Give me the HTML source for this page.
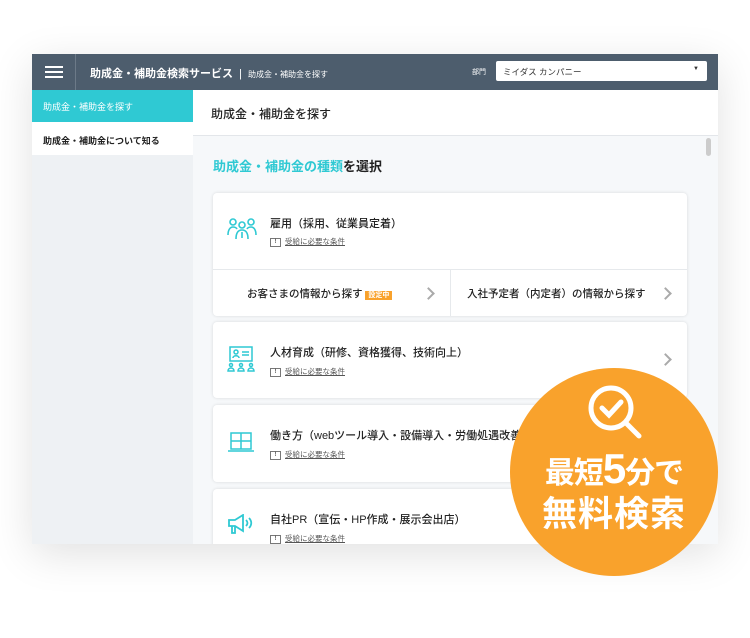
<!DOCTYPE html>
<html><head><meta charset="utf-8"><style>
*{margin:0;padding:0;box-sizing:border-box}
body{width:750px;height:638px;background:#fff;font-family:"Liberation Sans","Noto Sans CJK JP",sans-serif;position:relative;overflow:hidden;color:#222}
.win{position:absolute;left:32px;top:54px;width:686px;height:490px;background:#fff;box-shadow:0 10px 40px rgba(0,0,0,.12);overflow:hidden}
.hdr{position:absolute;left:0;top:0;width:686px;height:36px;background:#4d5d6d;color:#fff}
.burger{position:absolute;left:0;top:0;width:44px;height:36px;border-right:1px solid #6c7a88}
.burger i{position:absolute;left:13px;width:18px;height:2px;background:#fff}
.side{position:absolute;left:0;top:36px;width:161px;height:454px;background:#eef1f4}
.s1{height:32px;background:#2fc9d3;color:#fff;font-size:9px;padding:10px 0 0 11px}
.s2{height:33px;background:#fff;font-size:9px;padding:12px 0 0 11px;font-weight:bold}
.main{position:absolute;left:161px;top:36px;width:525px;height:454px;background:#f6f8fa}
.tb{height:46px;background:#fff;border-bottom:1px solid #e3e6ea;font-size:12px;padding:15px 0 0 18px;font-weight:500}
.card{position:absolute;left:20px;width:474px;background:#fff;border-radius:4px;box-shadow:0 0 3px rgba(0,0,0,.12)}
.ttl{position:absolute;left:57px;font-size:11px;font-weight:500}
.cond{position:absolute;left:57px;font-size:7.5px;color:#555}
.cond u{margin-left:4px}
.cond b{display:inline-block;width:11px;height:9px;border:1px solid #777;vertical-align:middle;font-size:6px;text-align:center;line-height:7px}
.chev{position:absolute;width:9px;height:9px;border-right:2px solid #aaa;border-top:2px solid #aaa;transform:rotate(45deg)}
.circ{position:absolute;left:510px;top:368px;width:208px;height:208px;border-radius:50%;background:#f9a22c;color:#fff;text-align:center;font-weight:bold}
</style></head><body>
<div class="win">
 <div class="hdr">
  <div class="burger"><i style="top:12px"></i><i style="top:17px"></i><i style="top:22px"></i></div>
  <div style="position:absolute;left:58px;top:11px;font-size:11px;font-weight:bold">助成金・補助金検索サービス <span style="font-weight:normal;margin:0 3px">|</span> <span style="font-size:8px;font-weight:normal">助成金・補助金を探す</span></div>
  <div style="position:absolute;left:440px;top:13px;font-size:7px">部門</div>
  <div style="position:absolute;left:464px;top:7px;width:211px;height:20px;background:#fff;border-radius:2px;color:#333;font-size:8.5px;padding:5px 0 0 7px">ミイダス カンパニー<span style="position:absolute;right:8px;top:5px;font-size:6px">▼</span></div>
 </div>
 <div class="side"><div class="s1">助成金・補助金を探す</div><div class="s2">助成金・補助金について知る</div></div>
 <div class="main">
  <div class="tb">助成金・補助金を探す</div>
  <div style="position:absolute;left:513px;top:48px;width:5px;height:18px;background:#ccc;border-radius:3px"></div>
  <div style="position:absolute;left:20px;top:66px;font-size:13px;font-weight:bold"><span style="color:#2fc9d3">助成金・補助金の種類</span>を選択</div>
  <div class="card" style="top:103px;height:123px">
   <svg style="position:absolute;left:14px;top:24px" width="30" height="22" viewBox="0 0 30 22" fill="none" stroke="#2fc9d3" stroke-width="1.6"><circle cx="6" cy="5" r="3"/><circle cx="24" cy="5" r="3"/><circle cx="15" cy="8" r="3"/><path d="M1 18c0-5 2-8 5-8s4 2 4 2M29 18c0-5-2-8-5-8s-4 2-4 2M9 22c0-6 2-9 6-9s6 3 6 9M15 15v6"/></svg>
   <div class="ttl" style="top:22px">雇用（採用、従業員定着）</div>
   <div class="cond" style="top:43px"><b>!</b><u>受給に必要な条件</u></div>
   <div style="position:absolute;left:0;top:76px;width:474px;border-top:1px solid #e6e9ec"></div>
   <div style="position:absolute;left:237px;top:76px;height:47px;border-left:1px solid #e6e9ec"></div>
   <div style="position:absolute;left:34px;top:93px;font-size:10.5px;font-weight:500">お客さまの情報から探す <span style="background:#f9a22c;color:#fff;font-size:7px;padding:1px 3px;font-weight:bold">設定中</span></div>
   <div class="chev" style="left:211px;top:96px"></div>
   <div style="position:absolute;left:254px;top:93px;font-size:10.5px;font-weight:500">入社予定者（内定者）の情報から探す</div>
   <div class="chev" style="left:448px;top:96px"></div>
  </div>
  <div class="card" style="top:232px;height:76px">
   <svg style="position:absolute;left:14px;top:24px" width="28" height="26" viewBox="0 0 28 26" fill="none" stroke="#2fc9d3" stroke-width="1.5"><rect x="3" y="1" width="22" height="14"/><circle cx="9" cy="6" r="2"/><path d="M6 12c0-3 6-3 6 0M15 6h7M15 9h7M1 25c0-4 6-4 6 0zM11 25c0-4 6-4 6 0zM21 25c0-4 6-4 6 0z"/><circle cx="4" cy="19" r="1.5"/><circle cx="14" cy="19" r="1.5"/><circle cx="24" cy="19" r="1.5"/></svg>
   <div class="ttl" style="top:22px">人材育成（研修、資格獲得、技術向上）</div>
   <div class="cond" style="top:44px"><b>!</b><u>受給に必要な条件</u></div>
   <div class="chev" style="left:448px;top:33px"></div>
  </div>
  <div class="card" style="top:315px;height:77px">
   <svg style="position:absolute;left:14px;top:27px" width="28" height="22" viewBox="0 0 28 22" fill="none" stroke="#2fc9d3" stroke-width="1.5"><rect x="4" y="1" width="20" height="16"/><path d="M1 19h26M14 1v16M4 9h20"/></svg>
   <div class="ttl" style="top:22px">働き方（webツール導入・設備導入・労働処遇改善）</div>
   <div class="cond" style="top:44px"><b>!</b><u>受給に必要な条件</u></div>
  </div>
  <div class="card" style="top:399px;height:80px">
   <svg style="position:absolute;left:14px;top:25px" width="26" height="22" viewBox="0 0 26 22" fill="none" stroke="#2fc9d3" stroke-width="1.8"><path d="M2 6h6l8-5v16l-8-5H2zM5 12v7h3v-7M19 6c2 2 2 4 0 6M22 4c3 3 3 7 0 10"/></svg>
   <div class="ttl" style="top:22px">自社PR（宣伝・HP作成・展示会出店）</div>
   <div class="cond" style="top:44px"><b>!</b><u>受給に必要な条件</u></div>
  </div>
 </div>
</div>
<div class="circ">
 <svg style="position:absolute;left:76px;top:15px" width="62" height="62" viewBox="0 0 62 62" fill="none" stroke="#fff" stroke-width="5" stroke-linecap="round"><circle cx="25" cy="25" r="20"/><path d="M40 40l13 13M16 25l7 7 12-13"/></svg>
 <div style="position:absolute;left:0;width:208px;top:80px;font-size:30px;line-height:42px;letter-spacing:-1px">最短<span style="font-size:42px">5</span>分で</div>
 <div style="position:absolute;left:0;width:208px;top:125px;font-size:35px;line-height:44px;letter-spacing:1px">無料検索</div>
</div>
</body></html>
